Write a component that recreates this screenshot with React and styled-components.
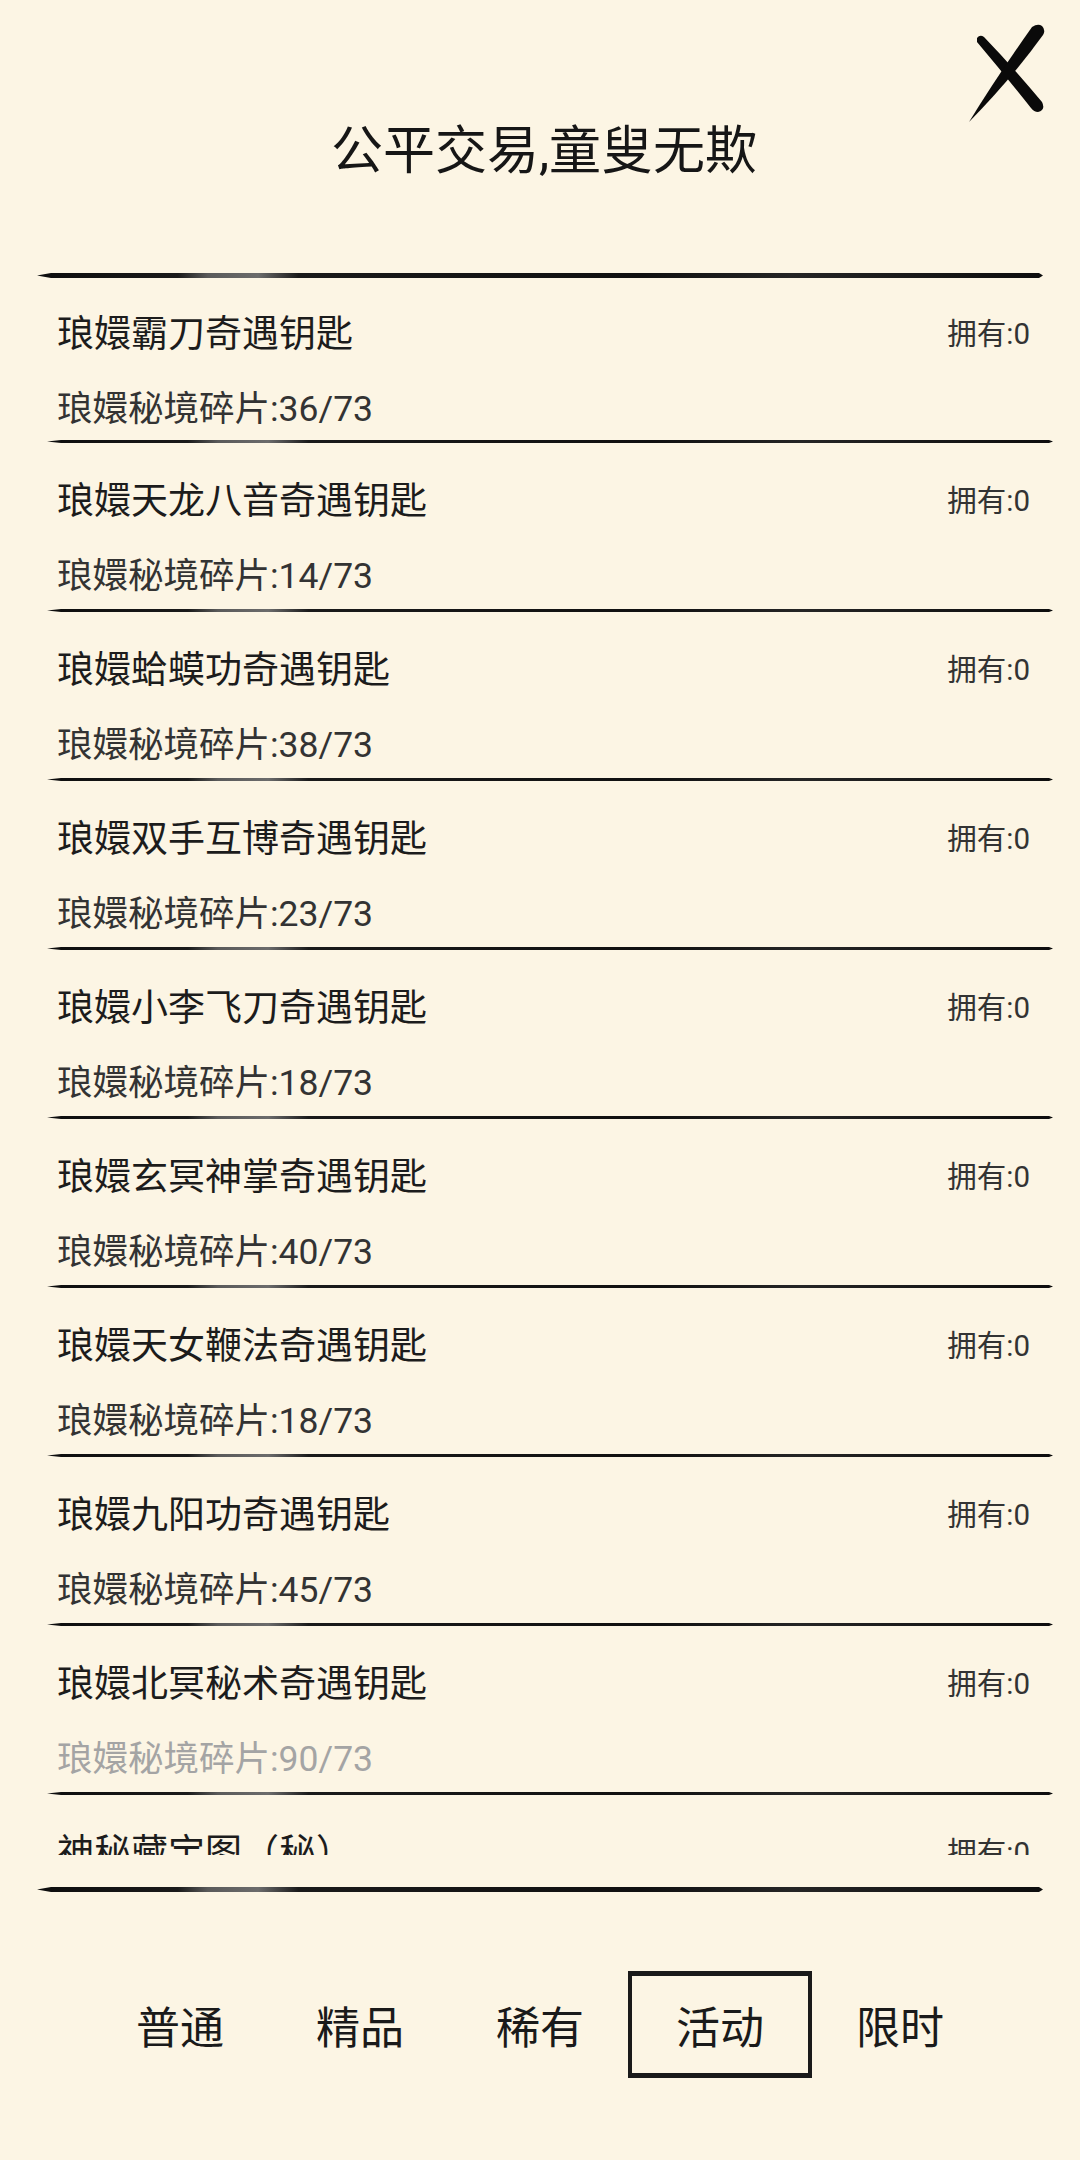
import React from 'react';
import styled, { createGlobalStyle } from 'styled-components';

const GlobalStyle = createGlobalStyle`
  html, body {
    margin: 0;
    padding: 0;
    background: #fcf5e4;
  }
  body {
    font-family: 'Roboto', 'Noto Sans CJK SC', sans-serif;
    color: #1e1e1e;
  }
`;

const Page = styled.div`
  width: 1080px;
  height: 2160px;
  background: #fcf5e4;
  display: flex;
  flex-direction: column;
  overflow: hidden;
`;

const Header = styled.header`
  position: relative;
  height: 273px;
  display: flex;
  justify-content: center;
  padding-top: 121px;
  box-sizing: border-box;
`;

const Title = styled.h1`
  margin: 0;
  font-size: 52px;
  line-height: 62px;
  font-weight: normal;
  color: #161616;
  padding-left: 8px;
`;

const CloseButton = styled.button`
  position: absolute;
  top: 20px;
  right: 30px;
  width: 90px;
  height: 110px;
  padding: 0;
  border: none;
  background: transparent;
  cursor: pointer;
`;

// brush-stroke divider, thick at the list edges, thin between rows
const BrushLine = styled.div`
  position: relative;
  height: ${p => (p.$thick ? 5 : 3)}px;
  margin: ${p => (p.$thick ? '0 37px 0 37px' : '0 27px 0 47px')};
  background: linear-gradient(
    to right,
    #0d0d0d 0%,
    #1a1a1a 14%,
    #5a5a5a 17%,
    #6b6b6b 22%,
    #1a1a1a 26%,
    #101010 60%,
    #252525 75%,
    #0d0d0d 100%
  );
  clip-path: polygon(0 50%, 14px 0, calc(100% - 4px) 0, 100% 50%, calc(100% - 4px) 100%, 14px 100%);
  flex-shrink: 0;

  &::before {
    content: '';
    position: absolute;
    left: 18px;
    top: -12px;
    width: 6px;
    height: 1px;
    background: #bbb;
  }
`;

const ListViewport = styled.div`
  height: 1577px;
  overflow: hidden;
  flex-shrink: 0;
`;

const Spacer = styled.div`
  height: ${p => p.$h}px;
  flex-shrink: 0;
`;

const Row = styled.div`
  display: flex;
  flex-direction: column;
  padding: ${p => (p.$first ? '28px 50px 6px 57px' : '30px 50px 8px 57px')};
  box-sizing: border-box;
`;

const NameLine = styled.div`
  display: flex;
  align-items: center;
  justify-content: space-between;
  height: 50px;
`;

const ItemName = styled.span`
  font-size: 37px;
  color: #1c1c1c;
  white-space: nowrap;
`;

const Owned = styled.span`
  font-size: 29.5px;
  color: #333;
`;

const Progress = styled.div`
  margin-top: 28px;
  height: 50px;
  line-height: 50px;
  font-size: 35.5px;
  color: ${p => (p.$dim ? '#a4a4a4' : '#333')};
  white-space: nowrap;
`;

const Tabs = styled.nav`
  display: flex;
  justify-content: center;
`;

const Tab = styled.div`
  height: 107px;
  display: flex;
  align-items: center;
  justify-content: center;
  font-size: 44px;
  color: #1a1a1a;
  box-sizing: border-box;
  border: 4px solid ${p => (p.$active ? '#1a1a1a' : 'transparent')};
  border-top-width: ${p => (p.$active ? 5 : 4)}px;
  border-bottom-width: ${p => (p.$active ? 5 : 4)}px;
  margin: 0 ${p => (p.$active ? -2 : 0)}px;
  width: ${p => (p.$active ? 184 : 180)}px;
`;

const items = [
  { name: '琅嬛霸刀奇遇钥匙', have: 36 },
  { name: '琅嬛天龙八音奇遇钥匙', have: 14 },
  { name: '琅嬛蛤蟆功奇遇钥匙', have: 38 },
  { name: '琅嬛双手互博奇遇钥匙', have: 23 },
  { name: '琅嬛小李飞刀奇遇钥匙', have: 18 },
  { name: '琅嬛玄冥神掌奇遇钥匙', have: 40 },
  { name: '琅嬛天女鞭法奇遇钥匙', have: 18 },
  { name: '琅嬛九阳功奇遇钥匙', have: 45 },
  { name: '琅嬛北冥秘术奇遇钥匙', have: 90 },
];

const tabs = ['普通', '精品', '稀有', '活动', '限时'];

function CloseIcon() {
  return (
    <svg width="90" height="110" viewBox="0 0 90 110">
      <path
        d="M17 18 Q20 14 24 17 Q52 46 82 82 Q86 90 78 92 Q74 92 71 88 Q44 54 17 22 Z"
        fill="#0a0a0a"
      />
      <path
        d="M72 7 Q78 3 82 6 Q86 10 83 15 Q52 58 9 102 Q36 58 72 7 Z"
        fill="#0a0a0a"
      />
    </svg>
  );
}

export default function App() {
  return (
    <>
      <GlobalStyle />
      <Page>
        <Header>
          <Title>公平交易,童叟无欺</Title>
          <CloseButton aria-label="关闭">
            <CloseIcon />
          </CloseButton>
        </Header>

        <BrushLine $thick />

        <ListViewport>
          {items.map((item, i) => (
            <React.Fragment key={item.name}>
              <Row $first={i === 0}>
                <NameLine>
                  <ItemName>{item.name}</ItemName>
                  <Owned>拥有:0</Owned>
                </NameLine>
                <Progress $dim={item.have > 73}>琅嬛秘境碎片:{item.have}/73</Progress>
              </Row>
              <BrushLine />
            </React.Fragment>
          ))}
          <Row>
            <NameLine>
              <ItemName>神秘藏宝图（秘）</ItemName>
              <Owned>拥有:0</Owned>
            </NameLine>
          </Row>
        </ListViewport>

        <Spacer $h={32} />
        <BrushLine $thick />
        <Spacer $h={79} />

        <Tabs>
          {tabs.map(t => (
            <Tab key={t} $active={t === '活动'}>{t}</Tab>
          ))}
        </Tabs>
      </Page>
    </>
  );
}
